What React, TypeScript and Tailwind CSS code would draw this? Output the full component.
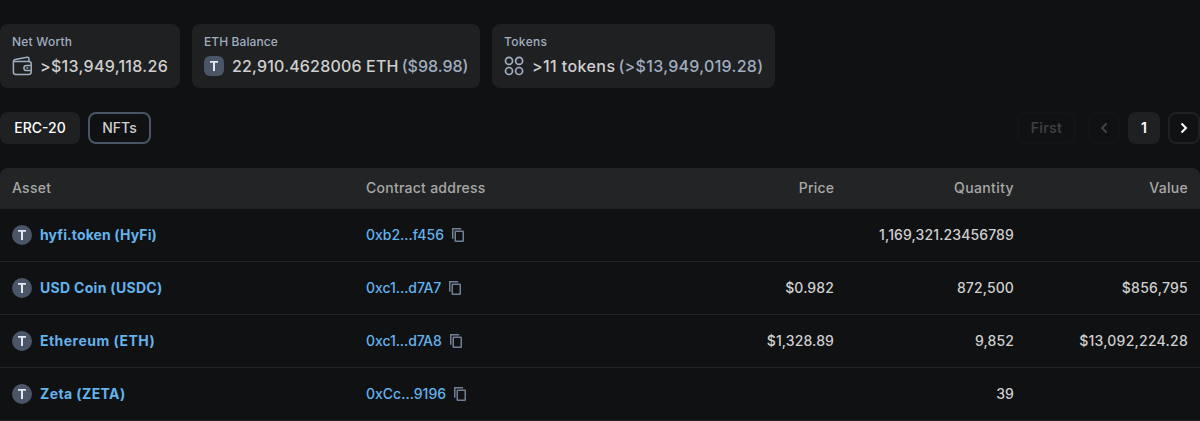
import type { ReactNode } from 'react';

function WalletIcon() {
  return (
    <svg className="h-5 w-5 shrink-0 text-[#a0aec0]" viewBox="0 0 20 20" fill="none" stroke="currentColor" strokeWidth="1.5">
      <path d="M1.4 5.4v10.7a2.4 2.4 0 0 0 2.4 2.4h13a2.4 2.4 0 0 0 2.4-2.4V7.8a2.4 2.4 0 0 0-2.4-2.4H1.4Z" strokeLinejoin="round" />
      <path d="M1.6 5.2c0-1 .5-1.6 1.5-1.8L15 1.2c1-.2 1.9.4 1.9 1.4v2.6" />
      <path d="M19.2 9.4h-4.7a2.6 2.6 0 0 0 0 5.2h4.7" />
      <path d="M14.4 12h1.8" />
    </svg>
  );
}

function TokensIcon() {
  return (
    <svg className="h-5 w-5 shrink-0 text-[#a0aec0]" viewBox="0 0 20 20" fill="none" stroke="currentColor" strokeWidth="1.7">
      <circle cx="5" cy="4.9" r="3.5" />
      <circle cx="15.1" cy="4.9" r="3.5" />
      <circle cx="5" cy="15" r="3.5" />
      <circle cx="15.1" cy="15" r="3.5" />
    </svg>
  );
}

function TokenLogo({ shape }: { shape: string }) {
  return (
    <svg className={`h-5 w-5 shrink-0 bg-[#4a5568] text-[#e2e8f0] ${shape}`} viewBox="0 0 20 20" fill="currentColor">
      <path d="M6 5h8v1.8h-3V15H9V6.8H6Z" />
    </svg>
  );
}

function CopyIcon() {
  return (
    <svg className="h-[14px] w-3 shrink-0 text-[#718096]" viewBox="0 0 12 14" fill="none" stroke="currentColor" strokeWidth="1.5">
      <path d="M.75 10.8V.75H9.2" />
      <rect x="3.25" y="3.2" width="8" height="10" rx=".5" />
    </svg>
  );
}

function Chevron({ d }: { d: string }) {
  return (
    <svg className="h-5 w-5" viewBox="0 0 20 20" fill="none" stroke="currentColor" strokeWidth="2">
      <path d={d} />
    </svg>
  );
}

function Stat({ label, labelSpacing, icon, width, children }: { label: string; labelSpacing: string; icon: ReactNode; width: string; children: ReactNode }) {
  return (
    <div className={`h-16 rounded-lg bg-[#1f2021] px-3 pt-2.5 ${width}`}>
      <div className={`text-xs leading-4 font-medium text-[#a0aec0] ${labelSpacing}`}>{label}</div>
      <div className="mt-1 flex items-center gap-2 text-base leading-6 font-medium whitespace-nowrap">
        {icon}
        <div className="flex gap-[3px]">{children}</div>
      </div>
    </div>
  );
}

const rows = [
  { name: 'hyfi.token (HyFi)', nameSpacing: 'tracking-[0.12px]', address: '0xb2...f456', addressSpacing: 'tracking-normal', price: '', quantity: '1,169,321.23456789', value: '' },
  { name: 'USD Coin (USDC)', nameSpacing: 'tracking-[0.3px]', address: '0xc1...d7A7', addressSpacing: 'tracking-[-0.05px]', price: '$0.982', quantity: '872,500', value: '$856,795' },
  { name: 'Ethereum (ETH)', nameSpacing: 'tracking-[0.47px]', address: '0xc1...d7A8', addressSpacing: 'tracking-[-0.08px]', price: '$1,328.89', quantity: '9,852', value: '$13,092,224.28' },
  { name: 'Zeta (ZETA)', nameSpacing: 'tracking-[0.4px]', address: '0xCc...9196', addressSpacing: 'tracking-normal', price: '', quantity: '39', value: '' },
];

export default function App() {
  return (
    <main className="h-[421px] overflow-hidden bg-[#101112] pt-6 font-['Inter',sans-serif] text-[#cfcfd0]">
      <section className="flex gap-3">
        <Stat label="Net Worth" labelSpacing="tracking-[0.22px]" icon={<WalletIcon />} width="w-[180px]">
          <span className="tracking-[0.3px]">&gt;$13,949,118.26</span>
        </Stat>
        <Stat label="ETH Balance" labelSpacing="tracking-[0.08px]" icon={<TokenLogo shape="rounded-md" />} width="w-[288px]">
          <span className="tracking-[0.18px]">22,910.4628006 ETH</span>
          <span className="text-[#a0aec0]">($98.98)</span>
        </Stat>
        <Stat label="Tokens" labelSpacing="tracking-[0.35px]" icon={<TokensIcon />} width="w-[283px]">
          <span className="tracking-[0.4px]">&gt;11 tokens</span>
          <span className="tracking-[0.3px] text-[#a0aec0]">(&gt;$13,949,019.28)</span>
        </Stat>
      </section>

      <nav className="mt-6 flex h-8 items-center justify-between text-sm font-medium">
        <div className="flex gap-2">
          <button className="h-8 w-20 rounded-lg bg-[#1f2021] text-white">ERC-20</button>
          <button className="h-8 w-[63px] rounded-lg border-2 border-[#4a5568]">NFTs</button>
        </div>
        <div className="flex">
          <button className="h-8 w-[59px] rounded-lg border-2 border-[#131415] font-semibold tracking-[0.3px] text-[#3e3f40]">First</button>
          <button className="ml-3 flex h-8 w-8 items-center justify-center rounded-lg border-2 border-[#131415] text-[#434445]">
            <Chevron d="M12.5 5.5 8 10l4.5 4.5" />
          </button>
          <button className="ml-2 h-8 w-8 rounded-lg bg-[#1f2021] font-semibold text-white">1</button>
          <button className="ml-2 flex h-8 w-8 items-center justify-center rounded-lg border-2 border-[#1f2021] text-white">
            <Chevron d="M7.5 5.5 12 10l-4.5 4.5" />
          </button>
        </div>
      </nav>

      <div className="mt-6 overflow-hidden rounded-t-lg">
        <table className="w-full table-fixed border-separate border-spacing-0 text-sm font-medium">
          <thead>
            <tr className="h-[41px] bg-[#232425] text-[#a7a8a8]">
              <th className="w-[30%] border-b border-[#1d2229] pl-3 text-left font-medium tracking-[0.25px]">Asset</th>
              <th className="w-[30%] border-b border-[#1d2229] pl-1.5 text-left font-medium tracking-[0.26px]">Contract address</th>
              <th className="w-[10%] border-b border-[#1d2229] pr-1.5 text-right font-medium tracking-[0.15px]">Price</th>
              <th className="w-[15%] border-b border-[#1d2229] pr-1.5 text-right font-medium tracking-[0.37px]">Quantity</th>
              <th className="w-[15%] border-b border-[#1d2229] pr-3 text-right font-medium tracking-[0.3px]">Value</th>
            </tr>
          </thead>
          <tbody>
            {rows.map((row) => (
              <tr key={row.name} className="h-[53px]">
                <td className="border-b border-[#232425] pl-3">
                  <a className={`flex items-center gap-2 font-bold text-[#63b3ed] ${row.nameSpacing}`}>
                    <TokenLogo shape="rounded-full" />
                    {row.name}
                  </a>
                </td>
                <td className="border-b border-[#232425] pl-1.5">
                  <div className="flex items-center gap-2">
                    <a className={`text-[#63b3ed] ${row.addressSpacing}`}>{row.address}</a>
                    <CopyIcon />
                  </div>
                </td>
                <td className="border-b border-[#232425] pr-1.5 text-right tracking-[0.12px]">{row.price}</td>
                <td className="border-b border-[#232425] pr-1.5 text-right tracking-[0.12px]">{row.quantity}</td>
                <td className="border-b border-[#232425] pr-3 text-right tracking-[0.25px]">{row.value}</td>
              </tr>
            ))}
          </tbody>
        </table>
      </div>
    </main>
  );
}
